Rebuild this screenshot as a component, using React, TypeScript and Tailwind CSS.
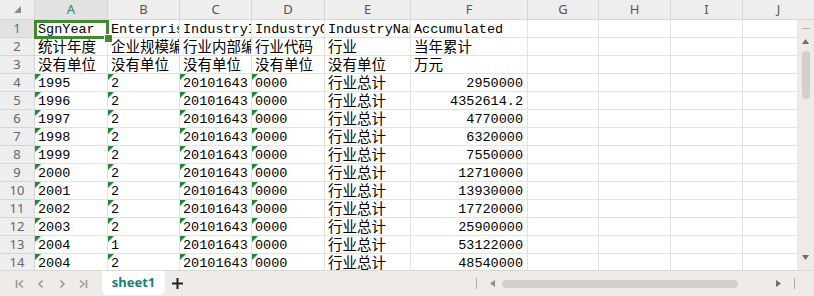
import React from "react";

const cols = [
  { key: "A", w: 73 },
  { key: "B", w: 72 },
  { key: "C", w: 72 },
  { key: "D", w: 73 },
  { key: "E", w: 86 },
  { key: "F", w: 117 },
  { key: "G", w: 71 },
  { key: "H", w: 72 },
  { key: "I", w: 72 },
  { key: "J", w: 72 },
];

const head: string[][] = [
  ["SgnYear", "EnterpriseScale", "IndustryInnerCode", "IndustryCode", "IndustryName", "Accumulated"],
  ["统计年度", "企业规模编码", "行业内部编码", "行业代码", "行业", "当年累计"],
  ["没有单位", "没有单位", "没有单位", "没有单位", "没有单位", "万元"],
];

const data: [string, string, string][] = [
  ["1995", "2", "2950000"],
  ["1996", "2", "4352614.2"],
  ["1997", "2", "4770000"],
  ["1998", "2", "6320000"],
  ["1999", "2", "7550000"],
  ["2000", "2", "12710000"],
  ["2001", "2", "13930000"],
  ["2002", "2", "17720000"],
  ["2003", "2", "25900000"],
  ["2004", "1", "53122000"],
  ["2004", "2", "48540000"],
];

const isCJK = (s: string) => /[\u4e00-\u9fff]/.test(s);

function Flag() {
  return (
    <svg className="absolute left-0 top-0" width="6" height="6" viewBox="0 0 6 6">
      <polygon points="0,0 6,0 0,6" fill="#1e8a36" />
    </svg>
  );
}

function Cell({
  w,
  text = "",
  right = false,
  flag = false,
}: {
  w: number;
  text?: string;
  right?: boolean;
  flag?: boolean;
}) {
  return (
    <div
      className="relative h-[18px] shrink-0 border-r border-b border-[#e2e2e2] bg-white"
      style={{ width: w }}
    >
      <div
        className={`h-full overflow-hidden whitespace-nowrap text-black ${
          right ? "text-right pr-[4px]" : "pl-[3px]"
        } ${
          isCJK(text)
            ? "text-[14.5px] leading-[16px] [font-family:'Noto_Sans_CJK_SC',sans-serif]"
            : "text-[13.5px] leading-[19px] [font-family:'Liberation_Mono',monospace]"
        }`}
      >
        {text}
      </div>
      {flag && <Flag />}
    </div>
  );
}

function RowHead({ n, active = false }: { n: number; active?: boolean }) {
  return (
    <div
      className={`flex h-[18px] w-[35px] shrink-0 items-center justify-center border-r border-b border-[#d6d6d6] text-[13px] [font-family:'Noto_Sans',sans-serif] ${
        active ? "bg-[#e2e2e2] text-[#2b8a73]" : "bg-[#eeeeee] text-[#666666]"
      }`}
    >
      {n}
    </div>
  );
}

export default function App() {
  const rows: string[][] = [
    ...head,
    ...data.map(([y, s, v]) => [y, s, "20101643", "0000", "行业总计", v]),
  ];

  return (
    <div className="flex h-[296px] w-[814px] flex-col overflow-hidden bg-white">
      {/* column header */}
      <div className="flex h-[20px] shrink-0">
        <div className="flex w-[35px] shrink-0 items-center justify-center border-r border-b border-[#d6d6d6] bg-[#eeeeee]">
          <svg width="7" height="7" viewBox="0 0 7 7">
            <polygon points="7,0 7,7 0,7" fill="#8a8a8a" />
          </svg>
        </div>
        {cols.map((c) => (
          <div
            key={c.key}
            className={`flex shrink-0 items-center justify-center border-r border-b border-[#d6d6d6] text-[13px] [font-family:'Noto_Sans',sans-serif] ${
              c.key === "A" ? "bg-[#e2e2e2] text-[#2b8a73]" : "bg-[#eeeeee] text-[#555555]"
            }`}
            style={{ width: c.w }}
          >
            {c.key}
          </div>
        ))}
      </div>

      {/* body */}
      <div className="flex h-[250px] shrink-0">
        <div className="relative w-[797px] shrink-0 overflow-hidden">
          {rows.map((r, i) => (
            <div key={i} className="flex">
              <RowHead n={i + 1} active={i === 0} />
              {cols.map((c, j) => (
                <Cell
                  key={c.key}
                  w={c.w}
                  text={r[j]}
                  right={j === 5 && i >= 3}
                  flag={i >= 3 && j < 4}
                />
              ))}
            </div>
          ))}
          {/* selection A1 */}
          <div className="pointer-events-none absolute left-[34px] top-0 z-10 h-[19px] w-[75px]">
            <div className="absolute left-0 top-0 h-[3px] w-full bg-[#41892f]" />
            <div className="absolute bottom-0 left-0 h-[3px] w-full bg-[#41892f]" />
            <div className="absolute left-0 top-0 h-full w-[3px] bg-[#41892f]" />
            <div className="absolute right-0 top-0 h-full w-[3px] bg-[#41892f]" />
            <div className="absolute -bottom-[3px] -right-[3px] h-[7px] w-[7px] bg-[#41892f] ring-1 ring-white" />
          </div>
        </div>
        {/* vertical scrollbar */}
        <div className="relative flex w-[17px] shrink-0 flex-col items-center bg-[#eeeae8]">
          <div className="mt-[8px] h-[1px] w-[8px] bg-[#b5b1af]" />
          <svg className="mt-[10px]" width="7" height="5" viewBox="0 0 7 5">
            <polygon points="3.5,0 7,5 0,5" fill="#6e6e6e" />
          </svg>
          <div className="mt-[7px] h-[48px] w-[8px] rounded-full bg-[#d3cfcd]" />
          <svg className="absolute bottom-[10px]" width="7" height="5" viewBox="0 0 7 5">
            <polygon points="0,0 7,0 3.5,5" fill="#6e6e6e" />
          </svg>
        </div>
      </div>

      {/* bottom bar */}
      <div className="flex h-[26px] shrink-0 items-start border-t border-[#dcd8d6] bg-[#efebe9]">
        <div className="flex h-[25px] w-[102px] shrink-0 items-center gap-[11px] pl-[15px] text-[#9a9a9a]">
          <svg width="10" height="10" viewBox="0 0 10 10" fill="none" stroke="currentColor" strokeWidth="1.6">
            <path d="M1.5 1v8M8 1.5L4 5l4 3.5" />
          </svg>
          <svg width="10" height="10" viewBox="0 0 10 10" fill="none" stroke="currentColor" strokeWidth="1.6">
            <path d="M6.5 1.5L3 5l3.5 3.5" />
          </svg>
          <svg width="10" height="10" viewBox="0 0 10 10" fill="none" stroke="currentColor" strokeWidth="1.6">
            <path d="M3.5 1.5L7 5l-3.5 3.5" />
          </svg>
          <svg width="10" height="10" viewBox="0 0 10 10" fill="none" stroke="currentColor" strokeWidth="1.6">
            <path d="M2 1.5L6 5 2 8.5M8.5 1v8" />
          </svg>
        </div>
        <div className="flex h-[24px] w-[63px] shrink-0 items-center justify-center rounded-b-[6px] bg-white text-[13px] font-bold text-[#17807e] [font-family:'Noto_Sans',sans-serif]">
          sheet1
        </div>
        <div className="flex h-[25px] w-[24px] items-center justify-center">
          <svg width="11" height="11" viewBox="0 0 11 11" stroke="#222" strokeWidth="2">
            <path d="M5.5 0v11M0 5.5h11" />
          </svg>
        </div>
        <div className="flex-1" />
        <div className="flex h-[25px] items-center">
          <div className="h-[11px] w-[1px] bg-[#b0acaa]" />
          <svg className="ml-[13px]" width="5" height="7" viewBox="0 0 5 7">
            <polygon points="5,0 5,7 0,3.5" fill="#8e8e8e" />
          </svg>
          <div className="ml-[7px] h-[8px] w-[236px] rounded-full bg-[#d1cfcd]" />
          <svg className="ml-[38px]" width="5" height="7" viewBox="0 0 5 7">
            <polygon points="0,0 5,3.5 0,7" fill="#6e6e6e" />
          </svg>
          <div className="ml-[13px] mr-[19px] h-[11px] w-[1px] bg-[#b0acaa]" />
        </div>
      </div>
    </div>
  );
}
